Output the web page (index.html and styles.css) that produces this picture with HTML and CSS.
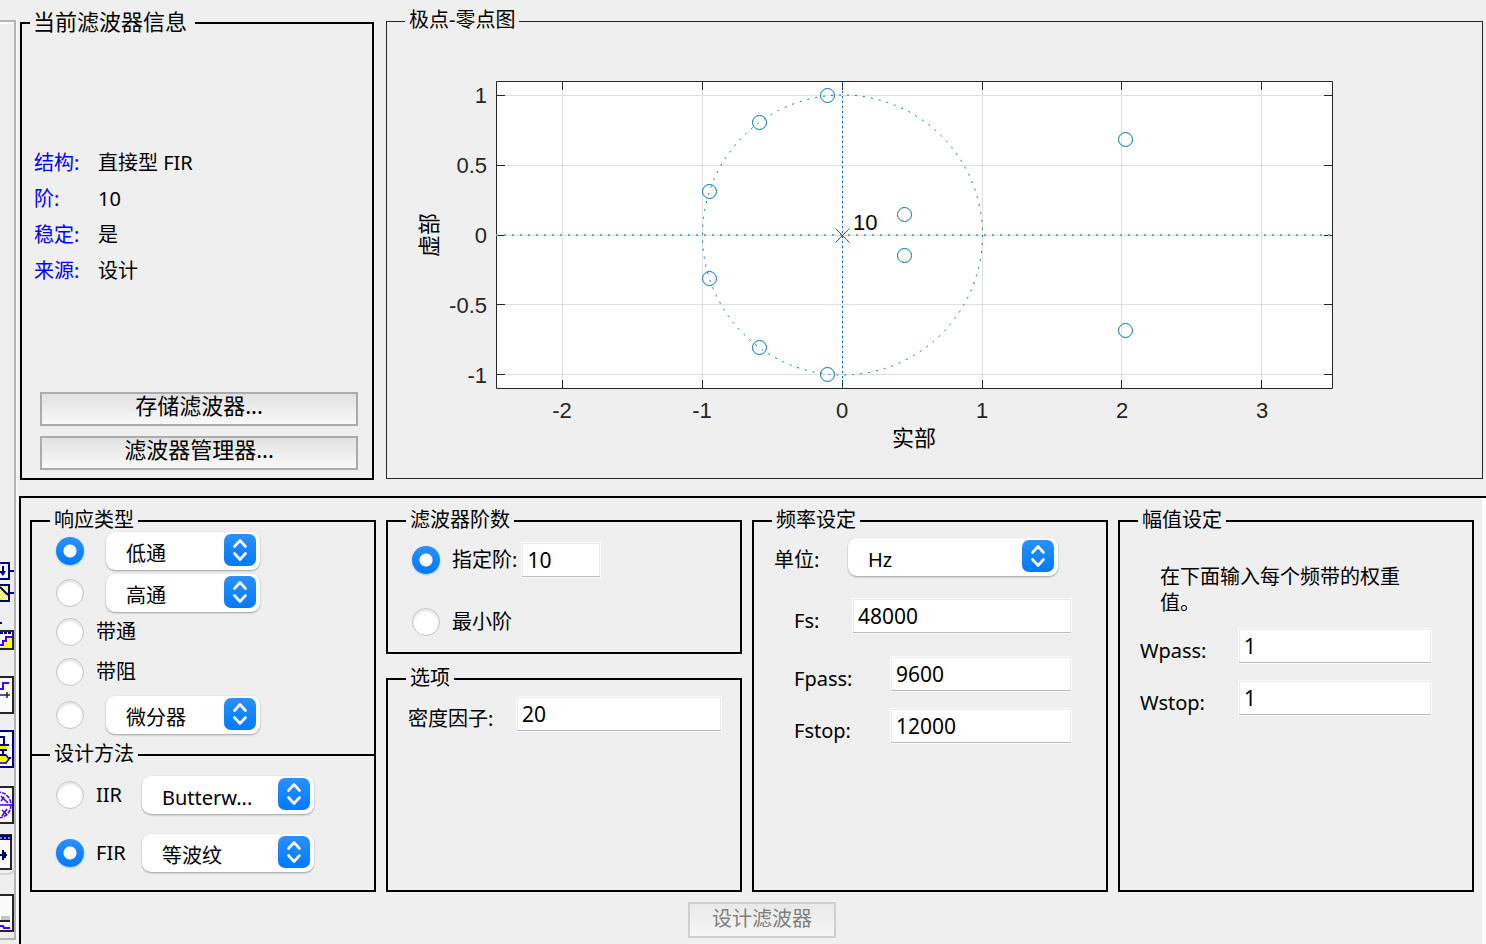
FILE: index.html
```html
<!DOCTYPE html>
<html lang="zh-CN">
<head>
<meta charset="utf-8">
<title>滤波器设计</title>
<link rel="stylesheet" href="styles.css">
</head>
<body>
<svg class="defs" aria-hidden="true">
  <defs>
    <linearGradient id="blue" x1="0" y1="0" x2="0" y2="1"><stop offset="0" stop-color="#2b90ff"/><stop offset="1" stop-color="#007aff"/></linearGradient>
    <pattern id="hatch" width="4" height="4" patternUnits="userSpaceOnUse"><rect width="4" height="4" fill="#fff"/><path d="M0 0h2v2h-2zM2 2h2v2h-2z" fill="#ff0"/></pattern>
    <symbol id="stepper" viewBox="0 0 32 32"><rect width="32" height="32" rx="7" fill="url(#blue)"/><path d="M10.500 12.500L16 6.500l5.500 6M10.500 19.500l5.500 6 5.500-6" fill="none" stroke="#fff" stroke-width="2.600" stroke-linecap="round" stroke-linejoin="round"/></symbol>
  </defs>
</svg>
<div class="app">
  <nav class="toolbar" aria-label="工具栏">
    <button class="tool" aria-label="量化"><svg width="14" height="40" viewBox="0 0 14 40"><path d="M-6 1H9V17H-6z" fill="#f4f4f4" stroke="#00007f" stroke-width="2"/><path d="M10 9h4M3 4v7" stroke="#00007f" stroke-width="2"/><path d="M-1 9h7l-3 5z" fill="#00007f"/><path d="M-6 23H9V39H-6z" fill="url(#hatch)" stroke="#00007f" stroke-width="2"/><path d="M10 31h4M0 25l8 8" stroke="#00007f" stroke-width="2"/></svg></button>
    <button class="tool" aria-label="变换"><svg width="14" height="42" viewBox="0 0 14 42"><path d="M0 5h2" stroke="#00007f" stroke-width="2"/><path d="M-2 13H13V31H-2z" fill="#ff0" stroke="#262626" stroke-width="2"/><path d="M0 14h12v5H6v6H3v4H0z" fill="#fff"/><path d="M0 15h12" stroke="#00007f" stroke-width="2" stroke-dasharray="3 1"/><path d="M0 27h3v-4h3v-4h6" fill="none" stroke="#3f00ff" stroke-width="2"/></svg></button>
    <button class="tool" aria-label="多速率"><svg width="14" height="38" viewBox="0 0 14 38"><path d="M-2 1H13V37H-2z" fill="#fbfbfb" stroke="#262626" stroke-width="2"/><path d="M0 13h3V7h6" fill="none" stroke="#3f00ff" stroke-width="2"/><path d="M0 19h10M7 16v6" stroke="#262626" stroke-width="1.500"/></svg></button>
    <button class="tool" aria-label="实现模型"><svg width="14" height="38" viewBox="0 0 14 38"><path d="M-2 1H13V37H-2z" fill="#fbfbfb" stroke="#00007f" stroke-width="2"/><path d="M0 16h7v3H0zM0 25h6l3 4-3 3H0z" fill="#ff0"/><path d="M0 7h4v9M0 15h9M3 19v6M0 20h7M0 25h6M9 28h2" fill="none" stroke="#00007f" stroke-width="2"/><path d="M6 25l3 4-3 4H0" fill="none" stroke="#00007f" stroke-width="1.500"/></svg></button>
    <button class="tool" aria-label="零极点编辑"><svg width="14" height="38" viewBox="0 -2 14 38"><path d="M-2 1H13V37H-2z" fill="#fbfbfb" stroke="#262626" stroke-width="2"/><circle cx="-2" cy="19" r="13" fill="none" stroke="#3f00ff" stroke-width="1.500" stroke-dasharray="4 1"/><path d="M0 19h12M1 10l7 7M1 15l3-4M2 24l5 5M7 23l-5 7" stroke="#3f00ff" stroke-width="1.500"/></svg></button>
    <button class="tool" aria-label="导入滤波器"><svg width="14" height="38" viewBox="0 4 14 38"><path d="M0 40h7q7 0 7-6" fill="none" stroke="#d4d4d4" stroke-width="2"/><path d="M-2 1H11V35H-2z" fill="#f8f8f8" stroke="#262626" stroke-width="2"/><path d="M0 1h12v5H0z" fill="#00007f"/><path d="M0 4h10" stroke="#fff" stroke-dasharray="2 2"/><path d="M0 21h7M3 16v10M5 18v6" stroke="#00007f" stroke-width="2"/></svg></button>
    <button class="tool" aria-label="设计滤波器"><svg width="14" height="40" viewBox="0 -2 14 40"><path d="M-2 1H13V37H-2z" fill="#fbfbfb" stroke="#262626" stroke-width="2"/><path d="M1 22h9v4H1z" fill="#c4c4c4"/><path d="M0 27h10" stroke="#262626" stroke-width="2"/><path d="M0 32h3l1 2h6" fill="none" stroke="#3f00ff" stroke-width="2"/></svg></button>
  </nav>
  <main class="main">
    <div class="top">
      <fieldset class="box info">
        <legend>当前滤波器信息</legend>
        <dl class="facts">
          <dt>结构:</dt><dd>直接型 FIR</dd>
          <dt>阶:</dt><dd>10</dd>
          <dt>稳定:</dt><dd>是</dd>
          <dt>来源:</dt><dd>设计</dd>
        </dl>
        <div class="actions">
          <button class="btn">存储滤波器...</button>
          <button class="btn">滤波器管理器...</button>
        </div>
      </fieldset>
      <fieldset class="box plot">
        <legend>极点-零点图</legend>
        <svg class="chart" viewBox="387 33 1095 445" role="img" aria-label="极点-零点图">
          <rect x="496.500" y="81.500" width="836" height="307" fill="#fff"/>
          <path class="grid" d="M562.500 82V388M702.500 82V388M842.500 82V388M982.500 82V388M1121.500 82V388M1261.500 82V388M497 95.500H1332M497 165.500H1332M497 235.500H1332M497 304.500H1332M497 374.500H1332"/>
          <path class="axis" d="M496.500 81.500H1332.500V388.500H496.500zM562.500 82v8M702.500 82v8M842.500 82v8M982.500 82v8M1121.500 82v8M1261.500 82v8M562.500 388v-8M702.500 388v-8M842.500 388v-8M982.500 388v-8M1121.500 388v-8M1261.500 388v-8M497 95.500h8M497 165.500h8M497 235.500h8M497 304.500h8M497 374.500h8M1332 95.500h-8M1332 165.500h-8M1332 235.500h-8M1332 304.500h-8M1332 374.500h-8"/>
          <path class="dots" d="M496 235H1332"/>
          <path class="dots dense" d="M842.500 388V82"/>
          <circle class="ring" cx="842.500" cy="235" r="140"/>
          <g class="zero">
            <circle cx="827.500" cy="95.500" r="7"/><circle cx="759.500" cy="122.500" r="7"/><circle cx="709.500" cy="191.500" r="7"/><circle cx="709.500" cy="278.500" r="7"/><circle cx="759.500" cy="347.500" r="7"/><circle cx="827.500" cy="374.500" r="7"/><circle cx="904.500" cy="214.500" r="7"/><circle cx="904.500" cy="255.500" r="7"/><circle cx="1125.500" cy="139.500" r="7"/><circle cx="1125.500" cy="330.500" r="7"/>
            <path d="M835.500 228.500l14 14M849.500 228.500l-14 14"/>
          </g>
          <g class="tick end"><text x="487" y="103">1</text><text x="487" y="173">0.5</text><text x="487" y="243">0</text><text x="487" y="313">-0.5</text><text x="487" y="383">-1</text></g>
          <g class="tick mid"><text x="562" y="418">-2</text><text x="702" y="418">-1</text><text x="842" y="418">0</text><text x="982" y="418">1</text><text x="1122" y="418">2</text><text x="1262" y="418">3</text></g>
          <text class="name" x="853" y="230">10</text>
          <text class="name mid" x="914" y="446">实部</text>
          <text class="name mid" transform="translate(437 235) rotate(-90)">虚部</text>
        </svg>
      </fieldset>
    </div>
    <form class="panel" onsubmit="return false">
      <div class="columns">
        <div class="column">
          <fieldset class="box response">
            <legend>响应类型</legend>
            <div class="row pick"><input type="radio" name="resp" aria-label="低通类" checked><span class="select"><select aria-label="低通类型"><option>低通</option></select><svg><use href="#stepper"/></svg></span></div>
            <div class="row pick"><input type="radio" name="resp" aria-label="高通类"><span class="select"><select aria-label="高通类型"><option>高通</option></select><svg><use href="#stepper"/></svg></span></div>
            <div class="row plain"><input type="radio" name="resp" id="bandpass"><label for="bandpass">带通</label></div>
            <div class="row plain last"><input type="radio" name="resp" id="bandstop"><label for="bandstop">带阻</label></div>
            <div class="row pick"><input type="radio" name="resp" aria-label="其他类"><span class="select"><select aria-label="其他类型"><option>微分器</option></select><svg><use href="#stepper"/></svg></span></div>
          </fieldset>
          <fieldset class="box method">
            <legend>设计方法</legend>
            <div class="row"><input type="radio" name="method" id="iir"><label for="iir">IIR</label><span class="select"><select aria-label="IIR 方法"><option>Butterw...</option></select><svg><use href="#stepper"/></svg></span></div>
            <div class="row"><input type="radio" name="method" id="fir" checked><label for="fir">FIR</label><span class="select"><select aria-label="FIR 方法"><option>等波纹</option></select><svg><use href="#stepper"/></svg></span></div>
          </fieldset>
        </div>
        <div class="column stacked">
          <fieldset class="box order">
            <legend>滤波器阶数</legend>
            <div class="row"><input type="radio" name="order" id="specify" checked><label for="specify">指定阶:</label><input class="text" type="text" aria-label="阶数" value="10"></div>
            <div class="row"><input type="radio" name="order" id="minimum"><label for="minimum">最小阶</label></div>
          </fieldset>
          <fieldset class="box options">
            <legend>选项</legend>
            <div class="field"><label for="density">密度因子:</label><input class="text" type="text" id="density" value="20"></div>
          </fieldset>
        </div>
        <fieldset class="box freq">
          <legend>频率设定</legend>
          <div class="field units"><label for="units">单位:</label><span class="select"><select id="units"><option>Hz</option></select><svg><use href="#stepper"/></svg></span></div>
          <div class="field fs"><label for="fs">Fs:</label><input class="text" type="text" id="fs" value="48000"></div>
          <div class="field edge"><label for="fpass">Fpass:</label><input class="text" type="text" id="fpass" value="9600"></div>
          <div class="field edge"><label for="fstop">Fstop:</label><input class="text" type="text" id="fstop" value="12000"></div>
        </fieldset>
        <fieldset class="box mag">
          <legend>幅值设定</legend>
          <p class="hint">在下面输入每个频带的权重值。</p>
          <div class="field"><label for="wpass">Wpass:</label><input class="text" type="text" id="wpass" value="1"></div>
          <div class="field"><label for="wstop">Wstop:</label><input class="text" type="text" id="wstop" value="1"></div>
        </fieldset>
      </div>
      <div class="footer"><button class="btn design" disabled>设计滤波器</button></div>
    </form>
  </main>
</div>
</body>
</html>
```

FILE: styles.css
```css
* {
  box-sizing: border-box;
}

body {
  margin: 0;
  background: #efefef;
  color: #000;
  font: 20px/26px "Noto Sans", "Noto Sans CJK SC", sans-serif;
}

button,
input,
select {
  font: inherit;
  color: inherit;
  margin: 0;
}

.defs {
  position: absolute;
  width: 0;
  height: 0;
}

.app {
  display: flex;
  min-height: 100vh;
}

/* Left toolbar */
.toolbar {
  display: flex;
  flex-direction: column;
  justify-content: flex-end;
  gap: 16px;
  width: 16px;
  flex: none;
  margin: 20px 3px 4px 0;
  padding-bottom: 6px;
  border: 2px solid #b4b4b4;
  border-left: 0;
  box-shadow: 2px 0 #f8f8f8, inset 0 2px #fff;
}

.tool {
  display: block;
  padding: 0;
  border: 0;
  background: none;
}

.tool svg {
  display: block;
  overflow: visible;
}

/* Titled boxes */
.main {
  display: flex;
  flex-direction: column;
  flex: 1;
  min-width: 0;
}

.box {
  margin: 0;
  padding: 0;
  min-width: 0;
  border: 2px solid #000;
}

.box > legend {
  margin-left: 18px;
  padding: 0 4px 2px;
  line-height: 20px;
}

.top {
  display: grid;
  grid-template-columns: minmax(0, 354fr) minmax(0, 1097fr);
  gap: 12px;
  padding: 10px 3px 16px 1px;
}

.info {
  display: flex;
  flex-direction: column;
}

.box.info > legend {
  margin-left: 8px;
  padding: 0 8px 4px 3px;
  font-size: 22px;
  line-height: 22px;
}

.facts {
  display: grid;
  grid-template-columns: 64px 1fr;
  margin: 109px 0 auto;
  padding-left: 12px;
  line-height: 36px;
}

.facts dt {
  color: #00f;
}

.facts dd {
  margin: 0;
}

.actions {
  display: grid;
  gap: 10px;
  padding: 0 14px 8px 18px;
}

.btn {
  padding: 0 0 8px;
  border: 2px solid #ababab;
  background: linear-gradient(#e2e2e2, #f8f8f8);
  font-size: 22px;
  line-height: 22px;
}

.plot {
  margin-bottom: 1px;
  border: 1px solid #262626;
}

.box.plot > legend {
  padding-bottom: 4px;
  line-height: 19px;
}

/* Pole-zero chart */
.chart {
  display: block;
  width: 100%;
}

.grid,
.axis,
.dots,
.ring,
.zero {
  fill: none;
  stroke-width: 1;
}

.grid {
  stroke: #dfdfdf;
}

.axis {
  stroke: #262626;
}

.dots {
  stroke: #66aad7;
  stroke-width: 2;
  stroke-dasharray: 2 6;
}

.dense {
  stroke: #0072bd;
  stroke-width: 1;
  stroke-dasharray: 2 3;
}

.ring {
  stroke: #0072bd;
  stroke-dasharray: 2 6;
}

.zero {
  stroke: #0072bd;
}

.tick,
.name {
  font: 22px "Liberation Sans", "Noto Sans CJK SC", sans-serif;
}

.tick {
  fill: #262626;
}

.end {
  text-anchor: end;
}

.mid {
  text-anchor: middle;
}

/* Design panel */
.panel {
  flex: 1;
  padding: 12px 12px 6px 9px;
  border-top: 2px solid #000;
  border-left: 2px solid #000;
  background: linear-gradient(to left, #fff 4px, #efefef 4px);
}

.columns {
  display: grid;
  grid-template-columns: minmax(0, 346fr) repeat(3, minmax(0, 356fr));
  gap: 10px;
}

.column {
  display: flex;
  flex-direction: column;
}

.stacked {
  gap: 14px;
}

.row {
  display: flex;
  align-items: center;
  gap: 12px;
  padding-left: 24px;
}

.response {
  padding-bottom: 20px;
  border-bottom: 0;
}

.pick {
  gap: 22px;
}

.pick + .pick {
  margin-top: 4px;
}

.pick .select {
  width: 154px;
}

.plain {
  height: 40px;
}

.last {
  margin-bottom: 4px;
}

.method {
  flex: 1;
  margin-top: -10px;
  padding: 10px 0 18px;
}

.method .row + .row {
  margin-top: 20px;
}

.method label {
  width: 34px;
}

.method .select {
  width: 172px;
}

.order {
  padding: 10px 0 16px;
}

.order .row + .row {
  margin-top: 30px;
}

.order .text {
  width: 80px;
  margin-left: -8px;
}

.options {
  flex: 1;
  padding-top: 6px;
}

.options .field {
  padding: 0 18px 0 20px;
}

.options label {
  width: 108px;
}

.field {
  display: flex;
  align-items: flex-end;
}

.field label {
  flex: none;
}

.field .text,
.field .select {
  flex: 1;
  min-width: 0;
}

.freq {
  padding-top: 6px;
}

.freq .field {
  padding: 0 34px 0 40px;
}

.freq .field + .field {
  margin-top: 22px;
}

.freq .edge + .edge {
  margin-top: 16px;
}

.freq .units {
  align-items: center;
  padding: 0 48px 0 20px;
}

.units label {
  width: 74px;
  padding-top: 6px;
}

.fs label {
  width: 58px;
}

.edge label {
  width: 96px;
}

.mag {
  padding-top: 32px;
}

.hint {
  width: 244px;
  margin: 0 0 12px 40px;
}

.mag .field {
  padding: 0 40px 0 20px;
}

.mag label {
  width: 98px;
}

.mag .field + .field {
  margin-top: 16px;
}

.footer {
  display: flex;
  justify-content: center;
  padding: 10px 0 0 20px;
}

.design {
  width: 148px;
  padding-bottom: 2px;
  border-color: #cfcfcf;
  background: linear-gradient(#e9e9e9, #f5f5f5);
  color: #808080;
  font-size: 20px;
  line-height: 30px;
}

/* Controls */
.text {
  height: 36px;
  padding: 0 5px;
  border: 1px solid #fbfbfb;
  border-radius: 0;
  background: #fff;
  box-shadow: inset 0 -1px #bcbcbc, inset 0 0 0 1px #eaeaea;
  font-size: 21px;
  outline: 0;
}

.select {
  position: relative;
  display: block;
}

.select select {
  display: block;
  width: 100%;
  height: 38px;
  padding: 6px 40px 0 20px;
  appearance: none;
  border: 0;
  border-radius: 9px;
  background: #fff;
  box-shadow: 0 1px 2px rgba(0, 0, 0, 0.35);
  outline: 0;
}

.select svg {
  position: absolute;
  top: 2px;
  right: 4px;
  width: 32px;
  height: 32px;
  pointer-events: none;
}

input[type="radio"] {
  flex: none;
  width: 28px;
  height: 28px;
  appearance: none;
  border: 1px solid #c6c6c6;
  border-radius: 50%;
  background: #fff;
  box-shadow: inset 0 2px 3px rgba(0, 0, 0, 0.12);
}

input[type="radio"]:checked {
  border: 0;
  background: radial-gradient(circle, #fff 6px, transparent 7px), linear-gradient(#2b90ff, #007aff);
  box-shadow: 0 1px 2px rgba(0, 122, 255, 0.3);
}
```
